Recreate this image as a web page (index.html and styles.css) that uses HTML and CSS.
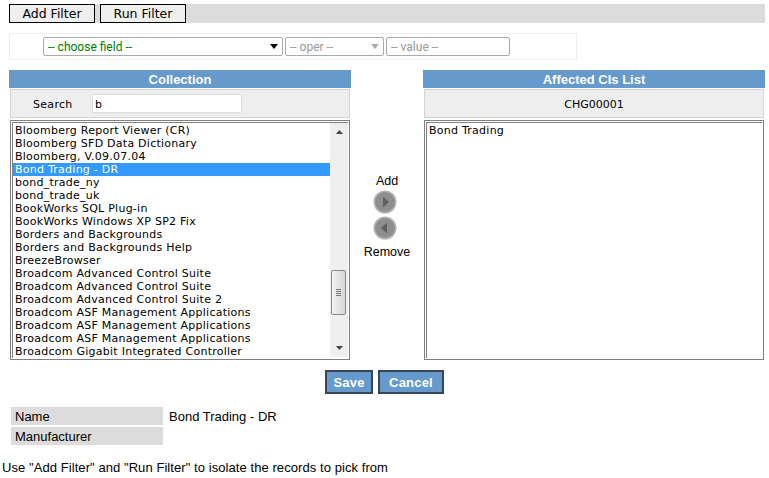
FILE: index.html
```html
<!DOCTYPE html>
<html lang="en">
  <head>
    <meta charset="utf-8">
    <title>Affected CIs</title>
    <link rel="stylesheet" href="styles.css">
  </head>
  <body>
    <div class="toolbar">
      <button class="tool-btn">Add Filter</button>
      <button class="tool-btn">Run Filter</button>
    </div>

    <div class="filter">
      <div class="fake-select field"><span>-- choose field --</span><i class="caret"></i></div>
      <div class="fake-select oper"><span>-- oper --</span><i class="caret"></i></div>
      <div class="value">-- value --</div>
    </div>

    <div class="picker">
      <div class="col">
        <div class="col-head">Collection</div>
        <div class="col-bar">
          <label class="search-label">Search</label>
          <div class="search-input">b</div>
        </div>
        <div class="listbox">
          <div class="list-inner">
            <div class="rows">
              <div class="row">Bloomberg Report Viewer (CR)</div>
              <div class="row">Bloomberg SFD Data Dictionary</div>
              <div class="row">Bloomberg, V.09.07.04</div>
              <div class="row selected">Bond Trading - DR</div>
              <div class="row">bond_trade_ny</div>
              <div class="row">bond_trade_uk</div>
              <div class="row">BookWorks SQL Plug-in</div>
              <div class="row">BookWorks Windows XP SP2 Fix</div>
              <div class="row">Borders and Backgrounds</div>
              <div class="row">Borders and Backgrounds Help</div>
              <div class="row">BreezeBrowser</div>
              <div class="row">Broadcom Advanced Control Suite</div>
              <div class="row">Broadcom Advanced Control Suite</div>
              <div class="row">Broadcom Advanced Control Suite 2</div>
              <div class="row">Broadcom ASF Management Applications</div>
              <div class="row">Broadcom ASF Management Applications</div>
              <div class="row">Broadcom ASF Management Applications</div>
              <div class="row">Broadcom Gigabit Integrated Controller</div>
            </div>
            <div class="scrollbar">
              <svg width="7" height="4" viewBox="0 0 7 4"><path d="M0 4L3.5 0L7 4Z" fill="#444"/></svg>
              <div class="thumb"><i></i><i></i><i></i><i></i></div>
              <svg width="7" height="4" viewBox="0 0 7 4"><path d="M0 0L3.5 4L7 0Z" fill="#444"/></svg>
            </div>
          </div>
        </div>
      </div>

      <div class="mover">
        <div>Add</div>
        <svg class="move-icon first" width="24" height="24" viewBox="0 0 24 24"><circle cx="12" cy="12" r="11.5" fill="#b4b4b4"/><circle cx="12" cy="12" r="10" fill="#8e8e8e"/><path d="M10 6.5L16 12L10 17.5Z" fill="#606060"/></svg>
        <svg class="move-icon" width="24" height="24" viewBox="0 0 24 24"><circle cx="12" cy="12" r="11.5" fill="#b4b4b4"/><circle cx="12" cy="12" r="10" fill="#8e8e8e"/><path d="M14 6.5L8 12L14 17.5Z" fill="#606060"/></svg>
        <div class="remove">Remove</div>
      </div>

      <div class="col">
        <div class="col-head">Affected CIs List</div>
        <div class="col-bar center">CHG00001</div>
        <div class="listbox">
          <div class="list-inner">
            <div class="rows">
              <div class="row plain">Bond Trading</div>
            </div>
          </div>
        </div>
      </div>
    </div>

    <div class="actions">
      <button class="act-btn save">Save</button>
      <button class="act-btn cancel">Cancel</button>
    </div>

    <div class="details">
      <div class="detail"><div class="detail-key">Name</div><div class="detail-val">Bond Trading - DR</div></div>
      <div class="detail"><div class="detail-key">Manufacturer</div></div>
    </div>

    <p class="hint">Use "Add Filter" and "Run Filter" to isolate the records to pick from</p>
  </body>
</html>
```

FILE: styles.css
```css
* { box-sizing: border-box; }

body {
	margin: 0;
	background: #fff;
	color: #000;
	font: 13px "Liberation Sans", Arial, sans-serif;
	overflow: hidden;
}

.toolbar {
	display: flex;
	gap: 5px;
	width: 756px;
	height: 19px;
	margin: 4px 0 0 9px;
	background: #dcdcdc;
}
.tool-btn {
	width: 86px;
	height: 19px;
	padding: 0;
	background: #efefef;
	border: 1px solid #000;
	border-radius: 0;
	font: 12.5px "DejaVu Sans", Verdana, sans-serif;
	color: #000;
}

.filter {
	display: flex;
	gap: 2px;
	width: 568px;
	height: 27px;
	margin: 10px 0 0 9px;
	padding: 3px 0 0 33px;
	border: 1px solid #eee;
}
.fake-select, .value {
	display: flex;
	align-items: center;
	justify-content: space-between;
	height: 19px;
	padding: 0 4px;
	background: #fff;
	border: 1px solid #aaa;
	border-radius: 2px;
	font: 12px Roboto, "DejaVu Sans", sans-serif;
	color: #999;
}
.field { width: 240px; color: #008000; }
.oper { width: 99px; }
.value { width: 124px; }
.caret {
	width: 0;
	height: 0;
	border: 4px solid transparent;
	border-top: 5px solid #aaa;
	border-bottom: 0;
}
.field .caret { border-top-color: #000; }

.picker {
	display: flex;
	margin: 10px 0 0 9px;
}
.col { width: 342px; }
.col-head {
	height: 18px;
	background: #6699cc;
	color: #fff;
	font: bold 13px/19px "Liberation Sans", Arial, sans-serif;
	text-align: center;
}
.col-bar {
	display: flex;
	align-items: center;
	height: 29px;
	margin: 1px 1px 0;
	background: #eee;
	border: 1px solid #d4d4d4;
	font: 11px "DejaVu Sans", Verdana, sans-serif;
}
.col-bar.center { justify-content: center; padding-top: 2px; }
.search-label { width: 81px; padding: 1px 0 0 22px; letter-spacing: 0.3px; }
.search-input {
	width: 150px;
	height: 19px;
	padding: 3px 2px 0;
	background: #fff;
	border: 1px solid #ddd;
	border-radius: 2px;
}

.listbox {
	height: 240px;
	margin: 2px 1px 0;
	padding: 1px;
	border: 1px solid #808080;
	font: 11px/13px "DejaVu Sans", Verdana, sans-serif;
	letter-spacing: 0.25px;
}
.list-inner {
	display: flex;
	height: 100%;
	border-top: 1px solid #808080;
	border-left: 1px solid #808080;
}
.rows {
	flex: 1;
	padding: 1px 0 0;
	overflow: hidden;
	white-space: nowrap;
}
.row { height: 13px; padding-left: 2px; }
.selected { background: #3399ff; color: #fff; }

.scrollbar {
	position: relative;
	display: flex;
	flex-direction: column;
	align-items: center;
	justify-content: space-between;
	width: 18px;
	margin-bottom: 1px;
	padding: 7px 0;
	background: #efefef;
}
.thumb {
	position: absolute;
	top: 147px;
	left: 1px;
	display: flex;
	flex-direction: column;
	justify-content: center;
	gap: 1px;
	width: 15px;
	height: 45px;
	padding: 0 4px;
	background: linear-gradient(90deg, #f2f2f2, #d6d6d6);
	border: 1px solid #8a8a8a;
	border-radius: 2px;
}
.thumb i { display: block; height: 1px; background: #777; }

.mover {
	display: flex;
	flex-direction: column;
	align-items: center;
	width: 72px;
	padding-top: 104px;
	font-size: 12.5px;
	line-height: 14px;
}
.move-icon { display: block; margin: 2px 5px 0 0; }
.remove { margin-top: 5px; }

.actions {
	display: flex;
	gap: 5px;
	margin: 10px 0 0 325px;
}
.act-btn {
	height: 24px;
	padding: 0;
	background: #6699cc;
	border: 2px solid #3a4654;
	border-radius: 0;
	color: #fff;
	font: bold 13px "Liberation Sans", Arial, sans-serif;
	letter-spacing: 0.2px;
}
.save { width: 48px; }
.cancel { width: 66px; }

.details { margin: 13px 0 0 11px; }
.detail { display: flex; height: 18px; margin-bottom: 2px; }
.detail-key {
	width: 152px;
	padding-left: 4px;
	background: #dcdcdc;
	line-height: 19px;
}
.detail-val { padding-left: 6px; line-height: 19px; }

.hint { margin: 16px 0 0 2px; line-height: 14px; letter-spacing: 0.07px; }
```
